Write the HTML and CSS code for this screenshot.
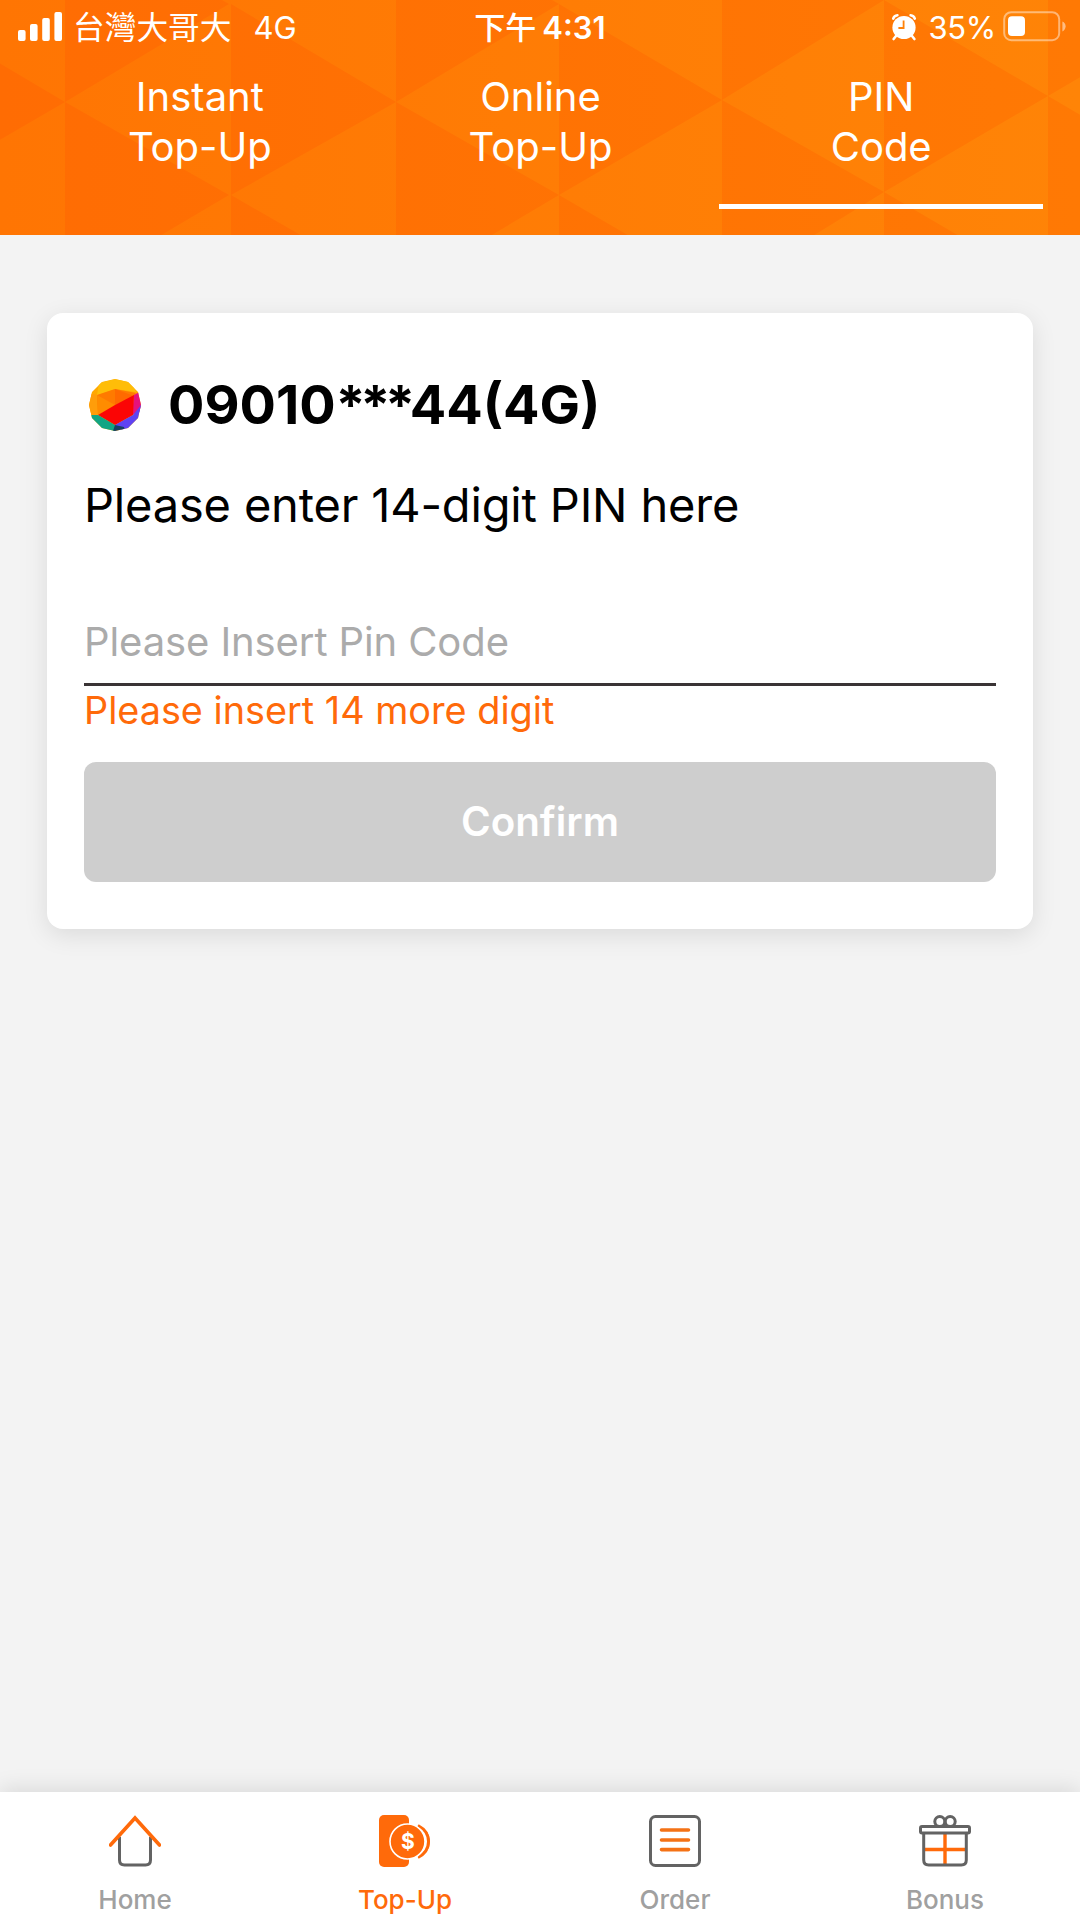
FILE: index.html
```html
<!DOCTYPE html>
<html lang="en">
<head>
  <meta charset="UTF-8" />
  <meta name="viewport" content="width=device-width, initial-scale=1" />
  <title>Top-Up - PIN Code</title>
  <link rel="stylesheet" href="styles.css">
</head>
<body>
  <header class="header">
    <svg class="header-bg" viewBox="0 0 1080 235" preserveAspectRatio="none">
      <defs>
        <linearGradient id="lightOrange" gradientUnits="userSpaceOnUse" x1="0" y1="0" x2="1080" y2="0">
          <stop offset="0" stop-color="#ff7503" />
          <stop offset="1" stop-color="#ff8407" />
        </linearGradient>
        <linearGradient id="darkOrange" gradientUnits="userSpaceOnUse" x1="0" y1="0" x2="1080" y2="0">
          <stop offset="0" stop-color="#ff6c03" />
          <stop offset="1" stop-color="#ff7904" />
        </linearGradient>
      </defs>
      <rect width="1080" height="235" fill="url(#lightOrange)" />
      <path fill="url(#darkOrange)" d="M-99 5L65 102L-99 197Z
        M65 -90L229 4L65 102Z M65 102L229 195L65 292Z
        M231 4L396 102L231 195Z M231 195L396 290L231 385Z
        M396 -90L559 4L396 102Z M396 102L559 195L396 292Z
        M559 4L722 100L559 195Z M559 195L722 290L559 385Z
        M722 -90L884 0L722 100Z M722 100L884 192L722 292Z
        M884 0L1048 96L884 192Z M884 192L1048 288L884 385Z
        M1048 -90L1212 0L1048 96Z M1048 96L1212 192L1048 290Z" />
    </svg>

    <div class="status-bar">
      <div class="status-left">
        <svg class="signal" width="44" height="29" viewBox="0 0 44 29" fill="#fff">
          <rect x="0" y="18" width="7.6" height="11" rx="2" />
          <rect x="12" y="12" width="7.6" height="17" rx="2" />
          <rect x="24.2" y="6" width="7.6" height="23" rx="2" />
          <rect x="36.4" y="0" width="7.6" height="29" rx="2" />
        </svg>
        <span class="carrier">台灣大哥大</span>
        <span class="network">4G</span>
      </div>
      <div class="status-time"><span class="ampm">下午</span><span class="clock">4:31</span></div>
      <div class="status-right">
        <svg class="alarm" width="26" height="28" viewBox="0 0 26 28">
          <g stroke="#fff" stroke-width="2.6" stroke-linecap="round" fill="none">
            <path d="M2.2 5.6Q3.2 2.6 6.4 2.2M23.8 5.6Q22.8 2.6 19.6 2.2M5 23L2.6 26M21 23L23.4 26" />
          </g>
          <circle cx="13" cy="14.5" r="11.6" fill="#fff" />
          <path d="M12.6 7.6V15H7.4" fill="none" stroke="#ff8209" stroke-width="1.8" />
        </svg>
        <span class="percent">35%</span>
        <svg class="battery" width="64" height="31" viewBox="0 0 64 31">
          <rect x="1.2" y="1.2" width="55" height="28" rx="7" fill="none" stroke="#fff" stroke-opacity=".45" stroke-width="2" />
          <rect x="5" y="5.2" width="17" height="19.8" rx="4" fill="#fff" />
          <path d="M59.4 10.5Q62.6 12 62.6 15.3Q62.6 18.6 59.4 20.5Z" fill="#fff" fill-opacity=".5" />
        </svg>
      </div>
    </div>

    <nav class="tabs">
      <a class="tab">Instant<br>Top-Up</a>
      <a class="tab">Online<br>Top-Up</a>
      <a class="tab active">PIN<br>Code</a>
    </nav>
  </header>

  <main class="content">
    <form class="card">
      <div class="phone">
        <svg class="ball" width="52" height="52" viewBox="0 0 52 52">
          <clipPath id="ballClip"><path d="M26 0L39 3L49 13L52 26L49 39L39 49L26 52L13 49L3 39L0 26L3 13L13 3Z" /></clipPath>
          <g clip-path="url(#ballClip)">
            <rect width="52" height="52" fill="#ffa800" />
            <path d="M26 0L42 2L47 13L26 10L8 16L10 4Z" fill="#ffbd08" />
            <path d="M0 14L8 16L9 36L0 36Z" fill="#ff9d0a" />
            <path d="M26 10L47 14L45 17L26 26L9 36L8 16Z" fill="#ff7a00" />
            <path d="M26 10L26 26L45 17Z" fill="#ff6a00" />
            <path d="M8 16L26 26L9 36Z" fill="#ff8c00" />
            <path d="M45 16L52 12V32L43 36Z" fill="#e5127d" />
            <path d="M9 36L26 26L45 16L44 36L26 46Z" fill="#fb0505" />
            <path d="M0 36L9 36L26 46L26 52L0 52Z" fill="#12a583" />
            <path d="M26 46L44 36L52 26V52H34Z" fill="#5f43f2" />
            <path d="M26 46L35 48L36 52H24Z" fill="#173f65" />
          </g>
        </svg>
        <h2 class="number">09010<span class="mask">***</span>44(4G)</h2>
      </div>
      <label class="prompt" for="pin">Please enter 14-digit PIN here</label>
      <input class="pin" type="text" id="pin" placeholder="Please Insert Pin Code">
      <div class="hint">Please insert 14 more digit</div>
      <button class="confirm" type="button">Confirm</button>
    </form>
  </main>

  <nav class="bottom-nav">
    <a class="nav-item">
      <svg width="52" height="52" viewBox="0 0 52 52" fill="none" stroke-width="3">
        <path d="M10.5 22V45Q10.5 50 15.5 50H36.5Q41.5 50 41.5 45V22" stroke="#636363" />
        <path d="M1.5 30L26 3L50.5 30" stroke="#ff6a0a" stroke-width="3.6" stroke-linecap="round" />
      </svg>
      <span>Home</span>
    </a>
    <a class="nav-item selected">
      <svg width="52" height="52" viewBox="0 0 52 52">
        <rect x="0" y="0" width="30" height="52" rx="5" fill="#ff6a0a" />
        <path d="M38 10A17 17 0 0 1 38 43Q49 38 49 26.5Q49 15 38 10Z" fill="#ff6a0a" />
        <path d="M39 10.5Q49.5 16 49.5 26.5Q49.5 37 39 42.5" fill="none" stroke="#ff6a0a" stroke-width="3" />
        <circle cx="28.5" cy="26.5" r="17.5" fill="#ff6a0a" stroke="#fff" stroke-width="1.6" />
        <text class="dollar" x="29" y="34" text-anchor="middle">$</text>
      </svg>
      <span>Top-Up</span>
    </a>
    <a class="nav-item">
      <svg width="52" height="52" viewBox="0 0 52 52" fill="none" stroke-width="3">
        <rect x="1.5" y="1.5" width="49" height="49" rx="5" stroke="#636363" />
        <path d="M12.5 15H39.5M12.5 25H39.5M12.5 34.6H39.5" stroke="#f47216" stroke-width="3.6" stroke-linecap="round" />
      </svg>
      <span>Order</span>
    </a>
    <a class="nav-item">
      <svg width="52" height="52" viewBox="0 0 52 52" fill="none" stroke="#636363" stroke-width="3">
        <path d="M26 19V50M5 34.5H47" stroke="#ff6a0a" stroke-width="3.4" />
        <circle cx="20.8" cy="6.5" r="5" />
        <circle cx="31.2" cy="6.5" r="5" />
        <path d="M4.7 18V45Q4.7 50 9.7 50H42.3Q47.3 50 47.3 45V18" />
        <rect x="1.5" y="11.5" width="49" height="6.5" rx="1.5" fill="#fff" />
      </svg>
      <span>Bonus</span>
    </a>
  </nav>
</body>
</html>
```
FILE: styles.css
```css
* { box-sizing: border-box; }

body {
  margin: 0;
  height: 100vh;
  display: flex;
  flex-direction: column;
  overflow: hidden;
  background: #f3f3f3;
  font-family: Inter, 'Noto Sans CJK TC', sans-serif;
  color: #000;
}

/* header */
.header {
  position: relative;
  height: 235px;
  color: #fff;
}

.header-bg {
  position: absolute;
  top: 0;
  left: 0;
  width: 100%;
  height: 100%;
}

.status-bar {
  position: relative;
  display: flex;
  justify-content: space-between;
  height: 54px;
  padding: 0 13px 0 18px;
  font-size: 31px;
  line-height: 55px;
}

.status-left,
.status-time,
.status-right {
  display: flex;
  align-items: baseline;
  flex: 1;
}

.signal {
  align-self: flex-start;
  margin: 12px 11px 0 0;
}

.carrier {
  font-family: 'Noto Sans CJK TC', sans-serif;
  font-weight: 400;
  font-size: 31.7px;
  line-height: 50px;
}

.network {
  margin-left: 22px;
}

.status-time {
  justify-content: center;
  padding-right: 5px;
  font-weight: 600;
}

.ampm {
  font-family: 'Noto Sans CJK TC', sans-serif;
  font-weight: 500;
  line-height: 50px;
  margin-right: 6px;
}

.status-right {
  justify-content: flex-end;
}

.alarm {
  align-self: flex-start;
  margin: 13px 11px 0 0;
}

.percent {
  letter-spacing: -0.3px;
}

.battery {
  align-self: flex-start;
  margin: 11px 0 0 7px;
}

.tabs {
  position: relative;
  display: flex;
  gap: 17px;
  padding: 18px 37px 0 38px;
}

.tab {
  flex: 1;
  height: 137px;
  font-size: 40px;
  line-height: 50px;
  text-align: center;
}

.tab.active {
  border-bottom: 5px solid #fff;
}

/* card */
.content {
  flex: 1;
  padding: 78px 47px 0;
}

.card {
  display: flex;
  flex-direction: column;
  padding: 59px 37px 47px;
  background: #fff;
  border-radius: 16px;
  box-shadow: 0 6px 24px rgba(0, 0, 0, 0.1);
}

.phone {
  display: flex;
  align-items: center;
  gap: 27px;
  padding-left: 5px;
}

.number {
  margin: 0;
  padding-top: 1px;
  font-size: 54px;
  line-height: 64px;
  font-weight: 700;
}

.mask {
  letter-spacing: -5.5px;
}

.prompt {
  margin-top: 40px;
  font-size: 47px;
  line-height: 56px;
  letter-spacing: -0.17px;
}

.pin {
  width: 100%;
  height: 75px;
  margin-top: 78px;
  padding: 0 0 12px;
  border: none;
  border-bottom: 3px solid #3a3435;
  outline: none;
  background: none;
  font-family: inherit;
  font-size: 40px;
  letter-spacing: -0.1px;
}

.pin::placeholder {
  color: #ababab;
}

.hint {
  font-size: 37.8px;
  line-height: 48px;
  color: #ff6a0a;
}

.confirm {
  height: 120px;
  margin-top: 28px;
  padding: 0 0 1px;
  border: none;
  border-radius: 12px;
  background: #cecece;
  color: #fff;
  font-family: inherit;
  font-size: 40.3px;
  font-weight: 600;
}

/* bottom navigation */
.bottom-nav {
  display: flex;
  height: 128px;
  background: #fff;
  box-shadow: 0 -4px 20px rgba(0, 0, 0, 0.1);
}

.nav-item {
  flex: 1;
  display: flex;
  flex-direction: column;
  align-items: center;
  padding-top: 23px;
  font-size: 26px;
  line-height: 32px;
  font-weight: 500;
  color: #a0a0a0;
}

.nav-item span {
  margin-top: 17px;
}

.nav-item.selected {
  color: #ff6a0a;
}

.dollar {
  font-size: 21px;
  font-weight: 700;
  fill: #fff;
}
```
